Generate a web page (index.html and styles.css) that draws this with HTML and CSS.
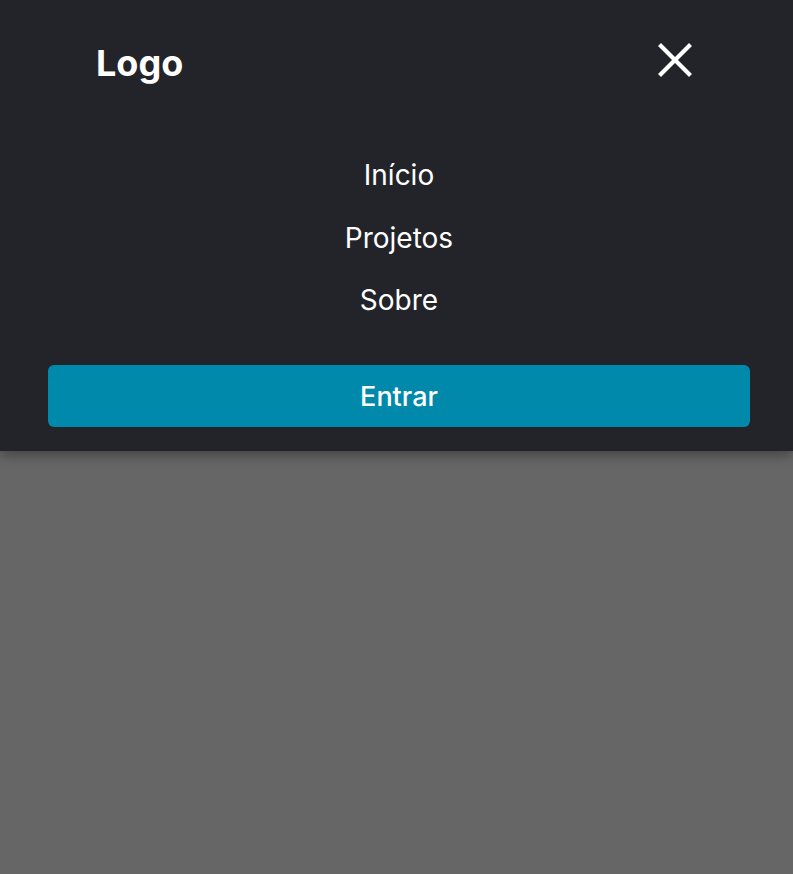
FILE: index.html
```html
<!DOCTYPE html>
<html lang="pt">
<head>
<meta charset="utf-8">
<link rel="stylesheet" href="styles.css">
</head>
<body>
<div class="overlay">
  <header class="menu">
    <div class="top">
      <span class="logo">Logo</span>
      <button class="close" aria-label="Fechar">
        <svg width="34" height="34" viewBox="0 0 34 34"><path d="M3 3L31 31M31 3L3 31" stroke="#fff" stroke-width="4.2" stroke-linecap="square"/></svg>
      </button>
    </div>
    <nav class="nav">
      <a href="#">Início</a>
      <a href="#">Projetos</a>
      <a href="#">Sobre</a>
    </nav>
    <button class="enter">Entrar</button>
  </header>
</div>
</body>
</html>
```
FILE: styles.css
```css
* { box-sizing: border-box; }
html, body { margin: 0; padding: 0; height: 100%; }
body { font-family: Inter, "Noto Sans", sans-serif; background: #666666; }
.overlay { min-height: 100vh; background: #666666; }
.menu {
  background: #232429;
  padding: 0 43px 24px 48px;
  box-shadow: 0 4px 12px rgba(0,0,0,0.35);
  display: flex;
  flex-direction: column;
}
.top {
  height: 128px;
  display: flex;
  align-items: center;
  justify-content: space-between;
  padding: 0 54px 2px 48px;
}
.logo { color: #fff; font-weight: 700; font-size: 36px; }
.close {
  background: none; border: 0; padding: 0; width: 34px; height: 34px;
  display: flex; align-items: center; justify-content: center; margin-top: -6px; margin-right: 4px;
}
.nav {
  display: flex; flex-direction: column; align-items: center;
  gap: 28.5px; padding: 30px 0 48px;
}
.nav a { color: #fff; text-decoration: none; font-size: 28px; line-height: 34px; }
.enter {
  width: 702px; height: 62px; border: 0; border-radius: 6px;
  background: #0089aa; color: #fff; font-family: inherit;
  font-size: 27px; font-weight: 500;
}
```
